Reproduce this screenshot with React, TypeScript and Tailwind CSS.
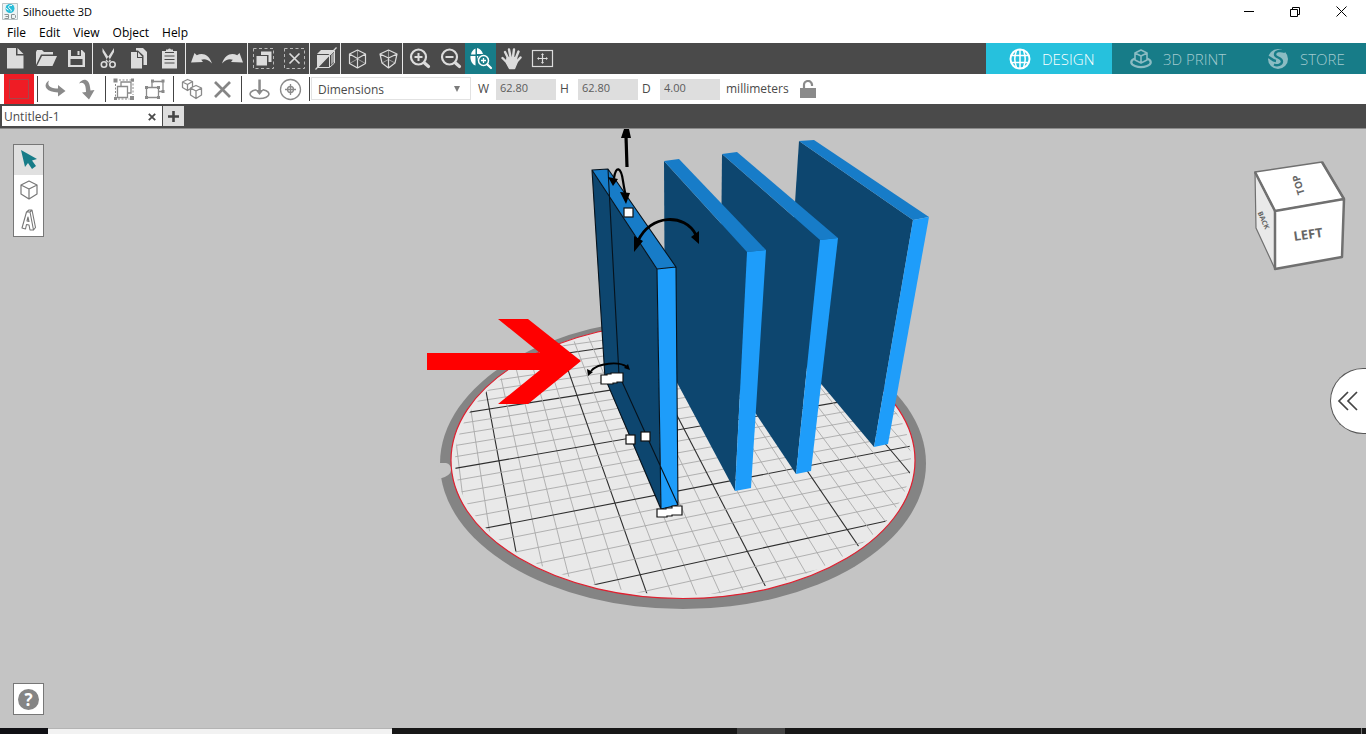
import { useState } from "react";
import type { ReactNode } from "react";

type Point = [number, number];

// 31x31 drawing used in every toolbar cell
function Icon({ children }: { children: ReactNode }) {
  return (
    <svg width="31" height="31" viewBox="0 0 31 31" fill="none" aria-hidden="true">
      {children}
    </svg>
  );
}

const LIGHT = "#dcdcdc";
const GREY = "#8a8a8a";

/* ---------- main toolbar ---------- */

const mainGroups: { label: string; active?: boolean; icon: ReactNode }[][] = [
  [
    {
      label: "New",
      icon: (
        <g fill={LIGHT}>
          <path d="M7 5h9v7.500h7.500V25.500H7z" />
          <path d="M17.500 5l6 6h-6z" />
        </g>
      ),
    },
    {
      label: "Open",
      icon: (
        <g fill={LIGHT}>
          <path d="M5 22V9l1-2h5l2 2h9v2.500H10z" />
          <path d="M11 13h15l-4.500 10H6z" />
        </g>
      ),
    },
    {
      label: "Save",
      icon: (
        <g>
          <path fill={LIGHT} fillRule="evenodd" d="M6 7h14l3 3v14H6zM9 7v6h10V7zM8.500 16v6h12v-6z" />
          <path fill={LIGHT} d="M15.500 8h2v4h-2z" />
        </g>
      ),
    },
  ],
  [
    {
      label: "Cut",
      icon: (
        <g>
          <path fill={LIGHT} d="M9.500 5l8.500 13-2.500 1.500L9.500 9zM21 5l-8.500 13 2.500 1.500L21 9z" />
          <circle cx="11" cy="21.500" r="2.700" stroke={LIGHT} strokeWidth="1.600" />
          <circle cx="19.500" cy="21.500" r="2.700" stroke={LIGHT} strokeWidth="1.600" />
        </g>
      ),
    },
    {
      label: "Copy",
      icon: (
        <g>
          <path fill={LIGHT} d="M12 5h7l4 4v13h-3.500V12.500L14 7.500H12z" />
          <path fill={LIGHT} d="M7 9h6v6h5v10.500H7z" />
          <path fill={LIGHT} d="M14 9l4.500 5H14z" />
        </g>
      ),
    },
    {
      label: "Paste",
      icon: (
        <g>
          <path fill={LIGHT} d="M7 8h15v17.500H7zM11 9V6.500h2a1.700 1.700 0 013 0h2V9z" />
          <path stroke="#4a4a4a" strokeWidth="1.200" d="M9.500 13h10M9.500 16.500h10M9.500 20h10M10 9.500h9" />
        </g>
      ),
    },
  ],
  [
    {
      label: "Undo",
      icon: <path fill={LIGHT} d="M5 19.500L8.500 10l2.300 2.300C16 9.300 23 11 26 20.500c-4-4.300-7.500-5-10.800-3.800L17 19z" />,
    },
    {
      label: "Redo",
      icon: <path fill={LIGHT} d="M26 19.500L22.500 10l-2.300 2.300C15 9.300 8 11 5 20.500c4-4.300 7.500-5 10.800-3.800L14 19z" />,
    },
  ],
  [
    {
      label: "Select All",
      icon: (
        <g>
          <rect x="5.500" y="5.500" width="20" height="20" stroke="#b8b8b8" strokeDasharray="3 2.500" />
          <path fill={LIGHT} d="M13 8.500h10.500v10.500h-3v-7H13z" />
          <path fill={LIGHT} d="M8.500 13h10.500v9.500H8.500z" />
        </g>
      ),
    },
    {
      label: "Deselect All",
      icon: (
        <g stroke={LIGHT}>
          <rect x="5.500" y="5.500" width="20" height="20" stroke="#b8b8b8" strokeDasharray="3 2.500" />
          <path strokeWidth="1.700" d="M10.500 10.500l10 10M20.500 10.500l-10 10" />
        </g>
      ),
    },
  ],
  [
    {
      label: "Half Transparent",
      icon: (
        <g>
          <path fill={LIGHT} d="M7 11l4-4h13l-4 4zM7 12h13L7 24.500z" />
          <path stroke={LIGHT} d="M7.500 24.500h12v-12M20 24l4.500-4V8M20 12l4.500-4.500" />
          <path fill={LIGHT} d="M21 12l3-3v10l-3 3z" opacity=".6" />
          <path stroke={LIGHT} strokeWidth="1.200" d="M5.500 26.500l21-22" />
        </g>
      ),
    },
  ],
  [
    {
      label: "Orthographic View",
      icon: (
        <g stroke={LIGHT}>
          <path strokeWidth="1.200" strokeLinejoin="round" d="M16.500 7l8 4v9.500l-8 4.500-8-4.500V11zM8.500 11l8 4.500 8-4.500M16.500 15.500V25" />
          <path opacity=".55" d="M16.500 7v9M8.500 20.500l8-4.500 8 4.500" />
        </g>
      ),
    },
    {
      label: "Perspective View",
      icon: (
        <g stroke={LIGHT}>
          <path strokeWidth="1.200" strokeLinejoin="round" d="M16.500 7l8.500 4-2 9-6.500 5-6.500-5-2-9zM8 11l8.500 4 8.500-4M16.500 15v10" />
          <path opacity=".55" d="M16.500 7v9.500M10 20l6.500-3.500L23 20" />
        </g>
      ),
    },
  ],
  [
    {
      label: "Zoom In",
      icon: (
        <g stroke={LIGHT}>
          <circle cx="15.500" cy="14" r="7.500" strokeWidth="2.200" />
          <path strokeWidth="3.200" strokeLinecap="round" d="M21.500 20l4 3.500" />
          <path strokeWidth="2" d="M11.500 14h8M15.500 10v8" />
        </g>
      ),
    },
    {
      label: "Zoom Out",
      icon: (
        <g stroke={LIGHT}>
          <circle cx="15.500" cy="14" r="7.500" strokeWidth="2.200" />
          <path strokeWidth="3.200" strokeLinecap="round" d="M21.500 20l4 3.500" />
          <path strokeWidth="2" d="M11.500 14h8" />
        </g>
      ),
    },
    {
      label: "Orbit",
      active: true,
      icon: (
        <g>
          <path fill="#fff" d="M10.500 5.500v6H6a8 8 0 014.500-6zM12 5c3 .5 5 2.500 6 6h-6zM5.500 13h5v9.500C7 21.500 5 17 5.500 13z" />
          <path fill="#fff" d="M12 13h1.500a7 7 0 00-1.500 5z" />
          <circle cx="18.500" cy="17.500" r="5" stroke="#fff" strokeWidth="1.500" />
          <path stroke="#fff" strokeWidth="2.200" strokeLinecap="round" d="M22.500 21.500l3.500 3.500" />
          <path stroke="#fff" strokeWidth="1.300" d="M16 17.500h5M18.500 15v5" />
        </g>
      ),
    },
    {
      label: "Pan",
      icon: (
        <g stroke={LIGHT} strokeLinecap="round">
          <path strokeWidth="2.400" d="M12.500 16L9 9M14.500 14L13 6.500M17 14l1-7.500M19.500 16l3-7.500M11.500 20L6.500 15M20.500 19l4-4.500" />
          <path fill={LIGHT} strokeWidth="1.500" strokeLinejoin="round" d="M11 15l9.500-.5.5 5-2.500 6h-5L10.500 20z" />
        </g>
      ),
    },
    {
      label: "Fit to Page",
      icon: (
        <g stroke={LIGHT}>
          <rect x="5.500" y="7.500" width="20" height="16" strokeWidth="1.200" />
          <path strokeWidth="1.200" d="M11 15.500h9M15.500 11v9" />
          <path fill={LIGHT} stroke="none" d="M10 15.500l2-1.500v3zM21 15.500l-2-1.500v3zM15.500 10l-1.500 2h3zM15.500 21l-1.500-2h3z" />
        </g>
      ),
    },
  ],
];

/* ---------- options bar ---------- */

const optionGroups: { label: string; icon: ReactNode }[][] = [
  [
    {
      label: "Rotate Horizontal",
      icon: <path fill={GREY} d="M9 6.500c-6 4-4 10 5 11.500l4 .5v4l7.500-5.500-7.500-6v3.500c-5 0-12-1.500-9-8z" />,
    },
    {
      label: "Rotate Vertical",
      icon: <path fill={GREY} d="M8 9.500c4-6 10-4.500 11 3.500l.5 3.500 4-.5-5.500 9.500-7-7 4-.5c0-7-2-11-7-8.500z" />,
    },
  ],
  [
    {
      label: "Group",
      icon: (
        <g>
          <path stroke={GREY} strokeWidth="1.300" d="M9.500 12.500h10v11h-10zM13 12V8h10v11h-3" />
          <path stroke={GREY} strokeDasharray="2 1.500" d="M7.500 10v15h14M11 6h14v15" />
          <path fill={GREY} d="M5.500 4.500h4v4h-4zM22 22h4v4h-4zM23 4.500h3v3h-3zM6 23h3v3H6z" />
        </g>
      ),
    },
    {
      label: "Ungroup",
      icon: (
        <g>
          <path stroke={GREY} strokeWidth="1.300" d="M7.500 13.500h12v10h-12zM13 13V7.500h11v10h-4" />
          <path fill={GREY} d="M6 12h3v3H6zM18 12h3v3h-3zM6 22h3v3H6zM18 22h3v3h-3zM12 5.500h3v3h-3zM22.500 5.500h3v3h-3zM22.500 16h3v3h-3z" />
        </g>
      ),
    },
  ],
  [
    {
      label: "Duplicate",
      icon: (
        <g stroke={GREY} strokeWidth="1.300" strokeLinejoin="round" fill="#fff">
          <path d="M11.500 5.500l5 2v6l-5 3-5-3V8zM6.500 8l5 2.500 5-3M11.500 10.500v6" />
          <path d="M20 11.500l5.500 2.500v7L20 24.500 14.500 21v-7zM14.500 14l5.500 3 5.500-3M20 17v7.500" />
        </g>
      ),
    },
    { label: "Delete", icon: <path stroke="#858585" strokeWidth="2.700" d="M8 8l15 15M23 8L8 23" /> },
  ],
  [
    {
      label: "Drop to Platform",
      icon: (
        <g>
          <ellipse cx="15.500" cy="20" rx="9.500" ry="4.500" stroke={GREY} strokeWidth="1.600" />
          <path fill="#fff" d="M12.500 13h6v6h-6z" />
          <path fill={GREY} d="M14.300 5.500h2.500V16h2.700l-4 5-4-5h2.800z" />
        </g>
      ),
    },
    {
      label: "Center on Platform",
      icon: (
        <g stroke={GREY} strokeWidth="1.300">
          <circle cx="15.500" cy="15.500" r="10" />
          <circle cx="15.500" cy="15.500" r="3" />
          <path d="M15.500 10v11M10 15.500h11" />
        </g>
      ),
    },
  ],
];

/* ---------- platform and objects ---------- */

const CELLS = 15;

// perspective of the print bed: grid cell -> scene
function project(col: number, row: number): Point {
  const s = col / CELLS;
  const t = row / CELLS;
  const w = 1 + 0.08452 * s - 0.255 * t;
  return [(311.7 * s - 98.2 * t + 489.3) / w, (-7.6 * s + 37.9 * t + 409) / w];
}

const gridLines = Array.from({ length: 36 }, (_, i) => i - 12).flatMap((n) => [
  { n, a: project(n, -16), b: project(n, 22) },
  { n, a: project(-8, n), b: project(26, n) },
]);

const slabs = [
  {
    side: "799,141 913,220 874,447 786,342",
    top: "799,141 814,140 929,217 913,220",
    edge: "913,220 929,217 888,444 874,447",
  },
  {
    side: "722,154 820,240 796,474 720,360",
    top: "722,154 737,152 838,238 820,240",
    edge: "820,240 838,238 811,471 796,474",
  },
  {
    side: "664,161 747,252 735,491 665,360",
    top: "664,161 679,159 766,250 747,252",
    edge: "747,252 766,250 751,488 735,491",
  },
  {
    side: "592,170 657,269 661,509 605,378",
    top: "592,170 608,169 676,267 657,269",
    edge: "657,269 676,267 678,505 661,509",
  },
];

function Scene() {
  return (
    <svg
      className="absolute inset-0 h-full w-full"
      viewBox="0 129 1366 599"
      preserveAspectRatio="xMidYMid meet"
      role="img"
      aria-label="3D design area"
    >
      <defs>
        <clipPath id="bed">
          <ellipse cx="683" cy="460" rx="228" ry="135" />
        </clipPath>
      </defs>

      {/* print bed */}
      <ellipse cx="683" cy="463.500" rx="243" ry="145.500" fill="#848484" />
      <ellipse cx="683" cy="460.400" rx="232" ry="138.100" fill="#e9e9e9" stroke="#e01f2f" strokeWidth="1.200" />
      <path d="M438 463h8q5 1 5 7t-12 9z" fill="#c4c4c4" />
      <g clipPath="url(#bed)">
        {gridLines.map(({ n, a, b }, i) => (
          <line
            key={i}
            x1={a[0]}
            y1={a[1]}
            x2={b[0]}
            y2={b[1]}
            stroke={n % 5 === 0 ? "#2e2e2e" : "#a9a9a9"}
            strokeWidth={n % 5 === 0 ? 1.1 : 0.9}
          />
        ))}
      </g>

      {slabs.map((slab) => (
        <g key={slab.side}>
          <polygon points={slab.side} fill="#0d466f" />
          <polygon points={slab.top} fill="#177cc8" />
          <polygon points={slab.edge} fill="#1e9dfa" />
        </g>
      ))}

      {/* selection outline */}
      <g fill="none" stroke="#06121c" strokeWidth="1.100" strokeLinejoin="round">
        <path d="M592 170l16-1 68 98-19 2zM592 170l13 208 56 131-4-240M676 267l2 238-17 4M608 169l11 206 59 130M605 378l14-3" />
      </g>

      {/* rotation and lift handles */}
      <g fill="none" stroke="#000">
        <path strokeWidth="3.200" d="M627 167l-1-31" />
        <path strokeWidth="2.200" d="M614 178c2-13 7-11 9 3 1 7 2 11 3 16" />
        <path strokeWidth="2.800" d="M638 241c12-27 47-28 58-6" />
        <path strokeWidth="1.800" d="M591 371c7-8 28-10 36-4" />
      </g>
      <g fill="#000">
        <path d="M621 138l3-9h5l2 9z" />
        <path d="M608 177l10 2-5 7zM620 192l10 1-4 11z" />
        <path d="M634 236l9 5-9 11zM691 237l8-6v13z" />
        <path d="M587 369l6 3-5 4zM624 368l4-4 2 6z" />
      </g>
      <g fill="#fff" stroke="#111" strokeWidth="1.200">
        <rect x="624" y="208" width="9" height="9" />
        <rect x="626" y="435" width="9" height="9" />
        <rect x="641" y="432" width="9" height="9" />
        <path d="M601 375h6v-1h4v-1h12v9h-6v1h-4v1h-12z" />
        <path d="M657 509h9v-1h6v-2h10v9h-10v1h-5v1h-10z" />
      </g>

      <polygon points="427,353 540,353 498,319 528,319 581,361 528,404 498,404 540,370 427,370" fill="#f00" />
    </svg>
  );
}

function ViewCube() {
  return (
    <svg width="100" height="116" viewBox="0 0 100 116" role="img" aria-label="View cube">
      <g stroke="#707070" strokeLinejoin="round">
        <path fill="#e9e9e9" strokeWidth="1.200" d="M5 14l20 39v58L6 70z" />
        <path fill="#fff" strokeWidth="1.500" d="M5 14L72 4l22 37-69 12z" />
        <path fill="#fff" strokeWidth="2.500" d="M25 53l69-12-2 58-67 12z" />
        <path fill="none" strokeWidth="2.500" d="M5 14l20 39M72 4l22 37" />
      </g>
      <g fill="#666" fontWeight="700" textAnchor="middle">
        <text x="58" y="81" fontSize="13" transform="rotate(-8 58 76)">LEFT</text>
        <text x="48" y="31" fontSize="10" transform="rotate(-107 48 27)">TOP</text>
        <text x="14" y="65" fontSize="7" transform="rotate(66 14 62)">BACK</text>
      </g>
    </svg>
  );
}

/* ---------- right hand mode tabs ---------- */

function DesignIcon() {
  return (
    <svg width="22" height="22" viewBox="0 0 22 22" fill="none" stroke="#fff" strokeWidth="1.500" aria-hidden="true">
      <circle cx="11" cy="11" r="9.500" strokeWidth="2" />
      <path d="M2 7.500h18M2 14.500h18M11 1.500v19M7.500 2.500c-2 5-2 12 0 17M14.500 2.500c2 5 2 12 0 17" />
    </svg>
  );
}

function PrintIcon() {
  return (
    <svg width="22" height="22" viewBox="0 0 22 22" fill="none" stroke="#8bbcc3" strokeWidth="1.600" aria-hidden="true">
      <path d="M5 10.500c-5 2-5 5.500 0 7.500 4 1.500 8 1.500 12 0 5-2 5-5.500 0-7.500" strokeWidth="2.200" />
      <path fill="#177c88" strokeLinejoin="round" d="M11 2l6 3v7l-6 3-6-3V5zM5 5l6 3 6-3M11 8v7" />
    </svg>
  );
}

function StoreIcon() {
  return (
    <svg width="22" height="22" viewBox="0 0 22 22" fill="none" aria-hidden="true">
      <circle cx="11" cy="11" r="10" fill="#8bbcc3" />
      <path
        stroke="#177c88"
        strokeWidth="2.400"
        d="M18 4c-5-2-10-1-10 2.500S15 9 15 13.500c0 3.500-5 4.500-8 3M1 9c2.500 0 3.500 3.500 8 4"
      />
    </svg>
  );
}

const modes = [
  { name: "DESIGN", icon: <DesignIcon />, style: "w-[126px] bg-[#26c1dd] text-white pl-[23px]" },
  { name: "3D PRINT", icon: <PrintIcon />, style: "w-[137px] bg-[#177c88] text-[#a3cbd0] pl-[18px]" },
  { name: "STORE", icon: <StoreIcon />, style: "w-[117px] bg-[#177c88] text-[#a3cbd0] pl-[18px]" },
];

function TitleBar() {
  return (
    <header className="flex h-[23px] shrink-0 items-center bg-white pl-[2px] pr-[2px]">
      <svg width="16" height="17" viewBox="0 0 16 17" aria-hidden="true">
        <path fill="#eef4f5" stroke="#b9c3c5" d="M.5.500h15v16H.5z" />
        <circle cx="8" cy="5.500" r="4.500" fill="#27bcd8" />
        <path fill="none" stroke="#fff" d="M10 2.500c-3-.5-4 1-3 2.500s3 1 2 3.500M3.500 5l3 2" />
        <path fill="none" stroke="#8c9495" d="M2.500 11.500h4v4h-4M3.500 13.500h3M9.500 11.500h3l1 1v2l-1 1h-3z" />
      </svg>
      <h1 className="ml-[5px] flex-1 text-[11px]">Silhouette 3D</h1>
      <button aria-label="Minimize" className="grid h-[22px] w-[46px] place-items-center">
        <svg width="10" height="10" viewBox="0 0 10 10" stroke="#000"><path d="M0 4.500h10" /></svg>
      </button>
      <button aria-label="Restore" className="grid h-[22px] w-[46px] place-items-center">
        <svg width="10" height="10" viewBox="0 0 10 10" fill="none" stroke="#000">
          <path d="M.5 2.500h7v7h-7zM2.500 2.500v-2h7v7h-2" />
        </svg>
      </button>
      <button aria-label="Close" className="grid h-[22px] w-[46px] place-items-center">
        <svg width="11" height="11" viewBox="0 0 11 11" stroke="#000"><path d="M.5.500l10 10M10.500.500l-10 10" /></svg>
      </button>
    </header>
  );
}

function SizeField({ id, label, value }: { id: string; label: string; value: string }) {
  const [size, setSize] = useState(value);
  return (
    <div className="flex items-center">
      <label htmlFor={id} className="w-[18px]">{label}</label>
      <input
        id={id}
        value={size}
        onChange={(e) => setSize(e.target.value)}
        className="mr-[4px] h-[21px] w-[60px] bg-[#dedede] pb-[4px] pl-[4px] text-[11px] text-[#5c5c5c]"
      />
    </div>
  );
}

export default function App() {
  return (
    <div className="flex h-screen min-h-[480px] flex-col overflow-hidden bg-white font-['Open_Sans','Noto_Sans',sans-serif] text-[12px] leading-4 text-black">
      <TitleBar />

      <nav className="flex h-[20px] shrink-0 items-center gap-[13px] pl-[7px]">
        <button>File</button>
        <button>Edit</button>
        <button>View</button>
        <button>Object</button>
        <button>Help</button>
      </nav>

      {/* Toolbar */}
      <div className="flex h-[31px] shrink-0 bg-[#4a4a4a]">
        {mainGroups.map((group, g) => (
          <div key={g} className={g < mainGroups.length - 1 ? "flex border-r border-[#e8e8e8] [&>button:last-child]:w-[30px]" : "flex"}>
            {group.map((tool) => (
              <button
                key={tool.label}
                aria-label={tool.label}
                className={tool.active ? "h-[31px] w-[31px] bg-[#177c88]" : "h-[31px] w-[31px]"}
              >
                <Icon>{tool.icon}</Icon>
              </button>
            ))}
          </div>
        ))}
        <div className="ml-auto flex">
          {modes.map((mode) => (
            <button key={mode.name} className={"flex items-center gap-[11px] whitespace-nowrap text-[15px] font-light " + mode.style}>
              {mode.icon}
              {mode.name}
            </button>
          ))}
        </div>
      </div>

      {/* Object options */}
      <div className="flex h-[30px] shrink-0 items-center bg-white pl-[4px] text-[#4a4a4a]">
        <button aria-label="Fill Color" className="mr-[3px] grid h-[30px] w-[30px] place-items-center bg-[#ef1c25]">
          <span className="block h-[20px] w-[20px] border border-[#a8454a]" />
        </button>
        {optionGroups.map((group, g) => (
          <div key={g} className="flex h-[26px] items-center border-l border-[#444] pl-[2px] pr-[3px]">
            {group.map((tool) => (
              <button key={tool.label} aria-label={tool.label} className="h-[31px] w-[31px]">
                <Icon>{tool.icon}</Icon>
              </button>
            ))}
          </div>
        ))}
        <div className="relative mr-[7px] h-[24px] border-l border-[#444] pl-[1px]">
          <select
            aria-label="Transform"
            className="h-[23px] w-[160px] appearance-none border border-[#e2e2e2] bg-white pl-[6px] pt-[2px]"
          >
            <option>Dimensions</option>
            <option>Position</option>
            <option>Scale</option>
          </select>
          <svg className="pointer-events-none absolute right-[10px] top-[9px]" width="8" height="7" viewBox="0 0 8 7" aria-hidden="true">
            <path fill="#7b7b7b" d="M1 0h6L4 6z" />
          </svg>
        </div>
        <SizeField id="width" label="W" value="62.80" />
        <SizeField id="height" label="H" value="62.80" />
        <SizeField id="depth" label="D" value="4.00" />
        <span className="ml-[2px]">millimeters</span>
        <button aria-label="Lock Aspect" className="ml-[11px]">
          <svg width="17" height="19" viewBox="0 0 17 19" fill="none">
            <path fill={GREY} d="M0 8h16v10H0z" />
            <path stroke={GREY} strokeWidth="2.200" d="M4 8V5.500a4 4 0 018-1V6" />
          </svg>
        </button>
      </div>

      {/* Document tabs */}
      <div className="flex h-[25px] shrink-0 gap-px border-b border-[#8a8a8a] bg-[#4a4a4a] pl-[2px] pt-[2px]">
        <div className="flex h-[20px] w-[160px] items-center justify-between bg-white pl-[2px] pr-[6px] pt-[1px] text-[#4a4a4a]">
          Untitled-1
          <button aria-label="Close tab">
            <svg width="8" height="8" viewBox="0 0 8 8" stroke="#4a4a4a" strokeWidth="1.800"><path d="M.8.800l6.400 6.400M7.200.800L.8 7.200" /></svg>
          </button>
        </div>
        <button aria-label="New tab" className="grid h-[20px] w-[21px] place-items-center bg-[#dedede]">
          <svg width="11" height="11" viewBox="0 0 11 11" stroke="#444" strokeWidth="2.600"><path d="M0 5.500h11M5.500 0v11" /></svg>
        </button>
      </div>

      <main className="relative flex-1 bg-[#c4c4c4]">
        <Scene />

        <div className="absolute left-[13px] top-[15px] flex w-[31px] flex-col border border-[#777] bg-white">
          <button aria-label="Select" className="h-[30px] bg-[#e0e0e0]">
            <svg width="29" height="30" viewBox="0 0 29 30"><path fill="#177c88" d="M7 5l16 9-5 1.500 4 5.500-4 3-4-6-3 4z" /></svg>
          </button>
          <button aria-label="Solids" className="h-[30px]">
            <svg width="29" height="30" viewBox="0 0 29 30" fill="none" stroke="#777" strokeWidth="1.200" strokeLinejoin="round">
              <path d="M15 6l8 4v9l-8 5-8-5v-9zM7 10l8 4 8-4M15 14v10" />
            </svg>
          </button>
          <button aria-label="3D Text" className="h-[31px]">
            <svg width="29" height="31" viewBox="0 0 29 31" fill="none" stroke="#777" strokeWidth="1.100" strokeLinejoin="round">
              <path d="M8 23l4.500-16h3.500l3.500 18h-3.500l-1-5-2.500-.5L11.500 24zM13 16l1-4 1 4.500zM12.500 7L15 5h3l3.500 17.500-2 2.500M16 7l2-2" />
            </svg>
          </button>
        </div>

        <div className="absolute right-[16px] top-[29px]">
          <ViewCube />
        </div>

        <button
          aria-label="Open panel"
          className="absolute right-0 top-[239px] flex h-[66px] w-[36px] items-center rounded-l-full border border-r-0 border-[#555] bg-white pl-[6px]"
        >
          <svg width="22" height="20" viewBox="0 0 22 20" fill="none" stroke="#444" strokeWidth="1.700">
            <path d="M11 1L2 10l9 9M20 1l-9 9 9 9" />
          </svg>
        </button>

        <button
          aria-label="Help"
          className="absolute bottom-[13px] left-[13px] grid h-[32px] w-[31px] place-items-center border border-[#777] bg-white"
        >
          <span className="grid h-[21px] w-[21px] place-items-center rounded-full bg-[#858585] text-[17px] font-bold leading-none text-white">?</span>
        </button>
      </main>

      <footer className="flex h-[6px] shrink-0 bg-[#171717]">
        <div className="w-[48px] bg-[#101014]" />
        <div className="w-[344px] border-t border-[#b4b4b4] bg-[#f2f2f2]" />
        <div className="ml-[345px] w-[48px] bg-[#444]" />
        <div className="ml-auto mr-[4px] w-px bg-[#777]" />
      </footer>
    </div>
  );
}
